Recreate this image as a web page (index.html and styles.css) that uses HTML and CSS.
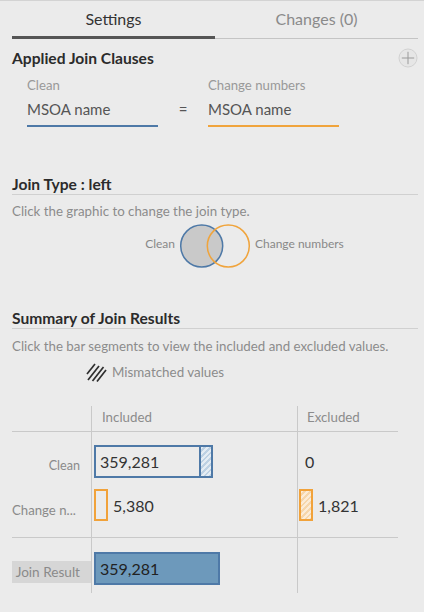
FILE: index.html
```html
<!DOCTYPE html>
<html>
<head>
<meta charset="utf-8">
<link rel="stylesheet" href="styles.css">
</head>
<body>
<div class="tabs">
  <div class="tab active">Settings</div>
  <div class="tab">Changes (0)</div>
</div>

<div class="sec-head first">
  <h2>Applied Join Clauses</h2>
  <svg class="plus" width="20" height="20" viewBox="0 0 20 20">
    <circle cx="10" cy="10" r="9" fill="#e6e6e6" stroke="#d2d2d2" stroke-width="1"/>
    <path d="M10 3.8V16.2M3.8 10H16.2" stroke="#9a9a9a" stroke-width="1" fill="none"/>
  </svg>
</div>

<div class="clause">
  <div class="field">
    <div class="flabel">Clean</div>
    <div class="fvalue blue">MSOA name</div>
  </div>
  <div class="eq">=</div>
  <div class="field">
    <div class="flabel">Change numbers</div>
    <div class="fvalue orange">MSOA name</div>
  </div>
</div>

<div class="sec-head rule jt"><h2>Join Type : left</h2></div>
<p class="hint">Click the graphic to change the join type.</p>
<div class="venn">
  <span class="venn-l">Clean</span>
  <svg width="80" height="46" viewBox="0 0 80 46">
    <circle cx="26.7" cy="23" r="21" fill="#c9c9c9" stroke="#4e79a7" stroke-width="1.5"/>
    <circle cx="53.3" cy="23" r="21" fill="none" stroke="#f0a43c" stroke-width="1.5"/>
  </svg>
  <span class="venn-r">Change numbers</span>
</div>

<div class="sec-head rule sum"><h2>Summary of Join Results</h2></div>
<p class="hint">Click the bar segments to view the included and excluded values.</p>
<div class="legend">
  <svg width="21" height="20" viewBox="0 0 21 20">
    <g stroke="#2e2e2e" stroke-width="1.7" stroke-linecap="butt">
      <line x1="1" y1="12" x2="9" y2="2"/>
      <line x1="2" y1="18" x2="13" y2="4"/>
      <line x1="6.5" y1="19" x2="17.5" y2="5"/>
      <line x1="11" y1="19.5" x2="20" y2="8"/>
    </g>
  </svg>
  <span>Mismatched values</span>
</div>

<div class="grid">
  <div class="cell lab hd"></div>
  <div class="cell inc hd"><span class="hdtext">Included</span></div>
  <div class="cell exc hd"><span class="hdtext">Excluded</span></div>

  <div class="cell lab r1">Clean</div>
  <div class="cell inc r1">
    <div class="bar-clean">
      <div class="bar-main">359,281</div>
      <div class="bar-hatch blue-hatch"></div>
    </div>
  </div>
  <div class="cell exc r1"><span class="val zero">0</span></div>

  <div class="cell lab r2 left">Change n...</div>
  <div class="cell inc r2">
    <div class="barrow"><div class="box-orange"></div><span class="val">5,380</span></div>
  </div>
  <div class="cell exc r2">
    <div class="barrow"><div class="box-orange orange-hatch"></div><span class="val">1,821</span></div>
  </div>

  <div class="cell lab r3"><div class="jr">Join Result</div></div>
  <div class="cell inc r3"><div class="bar-join">359,281</div></div>
  <div class="cell exc r3"></div>
</div>
</body>
</html>
```

FILE: styles.css
```css
* { box-sizing: border-box; }

body {
  margin: 0;
  background: #ebebeb;
  border-top: 1px solid #d3d3d3;
  font-family: Lato, "Noto Sans", sans-serif;
  font-size: 13.2px;
  color: #888;
}

.tabs {
  display: flex;
  align-items: flex-start;
  margin: 0 6px 0 12px;
}
.tab {
  flex: 1;
  text-align: center;
  font-size: 16px;
  line-height: 35px;
  height: 38px;
  color: #8a8a8a;
  border-bottom: 1px solid #c4c4c4;
}
.tab.active {
  color: #333;
  border-bottom: 3px solid #555;
}

.sec-head {
  display: flex;
  justify-content: space-between;
  align-items: center;
  margin: 0 6px 0 12px;
}
.sec-head h2 {
  margin: 0;
  font-size: 15.6px;
  font-weight: 700;
  color: #2b2b2b;
  line-height: 20px;
}
.first { margin-top: 9px; }
.rule { border-bottom: 1px solid #d0d0d0; }
.jt { margin-top: 47px; }
.sum { margin-top: 39px; }

.clause {
  display: flex;
  align-items: flex-end;
  padding-left: 27px;
  margin-top: 8px;
}
.field { width: 131px; }
.flabel {
  font-size: 13.2px;
  line-height: 18px;
  color: #999;
}
.fvalue {
  font-size: 15px;
  line-height: 22px;
  padding: 4px 0 5px;
  color: #555;
  border-bottom: 2px solid;
}
.fvalue.blue { border-color: #4e79a7; }
.fvalue.orange { border-color: #f0a43c; }
.eq {
  width: 50px;
  text-align: center;
  font-size: 15px;
  line-height: 22px;
  padding-bottom: 7px;
  color: #555;
}

.hint {
  margin: 7px 0 0 12px;
  line-height: 18px;
  font-size: 13.3px;
  color: #8c8c8c;
}
.sum + .hint { margin-top: 8px; }

.venn {
  display: flex;
  align-items: center;
  margin-top: 3px;
  height: 46px;
  font-size: 12px;
}
.venn-l {
  width: 175px;
  text-align: right;
  padding-bottom: 5px;
}
.venn-r { padding-bottom: 5px; }

.legend {
  display: flex;
  align-items: center;
  gap: 5px;
  margin-top: 7px;
  padding-left: 86px;
  height: 19px;
  font-size: 13.4px;
  color: #8c8c8c;
}

.grid {
  display: grid;
  grid-template-columns: 79px 206px 101px;
  margin: 25px 0 0 12px;
}
.inc, .exc { border-left: 1px solid #c9c9c9; }
.hd {
  height: 26px;
  border-bottom: 1px solid #c9c9c9;
  line-height: 22px;
}
.inc.hd { padding-left: 10px; }
.exc.hd { padding-left: 9px; }
.hdtext { color: #8c8c8c; font-size: 13.3px; }

.lab {
  text-align: right;
  padding-right: 11px;
  line-height: 18px;
  color: #8a8a8a;
  white-space: nowrap;
}
.lab.left { text-align: left; padding-right: 0; }
.r1 { height: 52px; }
.r2 { height: 54px; border-bottom: 1px solid #c9c9c9; }
.r3 { height: 55px; }
.lab.r1 { padding-top: 25px; font-size: 12.6px; }
.lab.r2 { padding-top: 17px; }
.lab.r3 { padding: 23px 0 0; }
.inc.r1, .exc.r1 { padding-top: 13px; }
.inc.r2, .exc.r2 { padding-top: 5px; }
.inc.r3 { padding-top: 14px; }
.inc { padding-left: 2px; }
.exc.r1 { padding-left: 7px; }
.exc.r2 { padding-left: 1px; }

.jr {
  height: 22px;
  line-height: 22px;
  background: #d6d6d6;
  padding-right: 11px;
  color: #8a8a8a;
  font-size: 13.6px;
}

.bar-clean {
  display: flex;
  width: 119px;
  height: 33px;
  border: 2px solid #4e79a7;
}
.bar-main {
  flex: 1;
  display: flex;
  align-items: center;
  padding-left: 4px;
  font-size: 16px;
  color: #333;
  border-right: 2px solid #4e79a7;
}
.bar-hatch { width: 10px; }
.blue-hatch {
  background: repeating-linear-gradient(135deg, #e4ecf3 0 2px, #bdd1e3 2px 4px);
}
.orange-hatch {
  background: repeating-linear-gradient(135deg, #fbecd8 0 2px, #f6d6ab 2px 4px);
}

.barrow {
  display: flex;
  align-items: center;
}
.box-orange {
  width: 14px;
  height: 32px;
  border: 2px solid #f1a23a;
}
.val {
  font-size: 16px;
  color: #333;
  margin-left: 5px;
}
.zero {
  margin-left: 0;
  line-height: 33px;
}

.bar-join {
  width: 126px;
  height: 33px;
  border: 2px solid #4e79a7;
  background: #6d99bb;
  display: flex;
  align-items: center;
  padding-left: 4px;
  font-size: 16px;
  color: #222;
}
```
